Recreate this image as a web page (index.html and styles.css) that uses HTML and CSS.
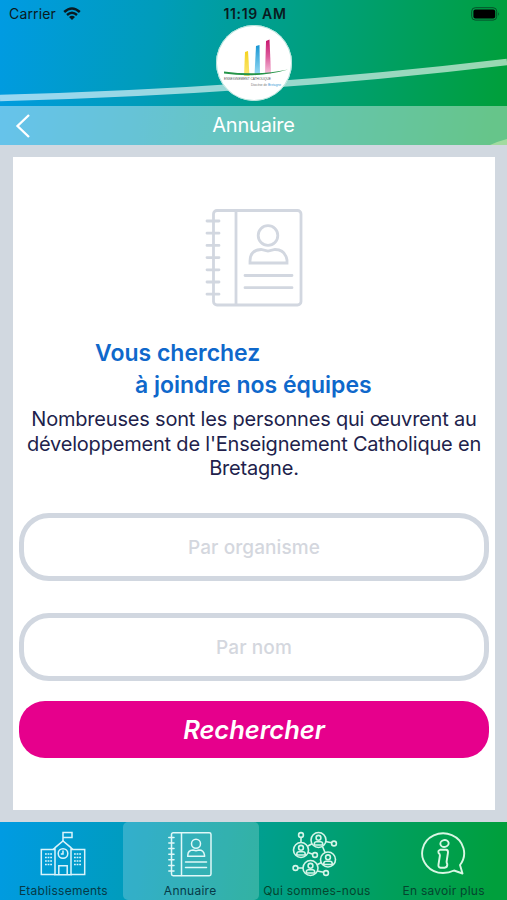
FILE: index.html
```html
<!DOCTYPE html>
<html lang="fr">
<head>
    <meta charset="UTF-8">
    <meta name="viewport" content="width=device-width, initial-scale=1.0">
    <title>Annuaire</title>
    <link rel="stylesheet" href="styles.css">
</head>
<body>
    <div class="app">
        <header class="header">
            <svg class="header-wave" viewBox="0 0 507 145" aria-hidden="true">
                <path d="M0 98 Q265 91 507 62" fill="none" stroke="#fff" stroke-opacity=".6" stroke-width="6.300"/>
                <path d="M490 145 Q499 141 507 139 V145Z" fill="#8fd46f" fill-opacity=".7"/>
            </svg>

            <div class="status-bar">
                <div class="status-left">
                    <span class="carrier">Carrier</span>
                    <svg class="wifi" viewBox="0 0 18 13">
                        <path d="M1.2 5 Q9 -2 16.8 5" fill="none" stroke="#0a1a20" stroke-width="2.5"/>
                        <path d="M4 8 Q9 3.6 14 8" fill="none" stroke="#0a1a20" stroke-width="2.4"/>
                        <path d="M9 13 L6 10 Q9 7.7 12 10Z" fill="#0a1a20"/>
                    </svg>
                </div>
                <span class="time">11:19 AM</span>
                <svg class="battery" viewBox="0 0 30 14">
                    <rect x=".7" y=".7" width="25" height="12.4" rx="3.6" fill="none" stroke="#06502a" stroke-width="1"/>
                    <rect x="2.4" y="2.6" width="21.8" height="8.8" rx="2" fill="#000"/>
                    <path d="M27.2 5 Q29 7 27.2 9Z" fill="#06502a"/>
                </svg>
            </div>

            <div class="logo">
                <svg viewBox="0 0 76 76">
                    <defs>
                        <linearGradient id="yellow" x2="0" y2="1"><stop offset="0" stop-color="#f5d21c"/><stop offset="1" stop-color="#fbe878"/></linearGradient>
                        <linearGradient id="blue" x2="0" y2="1"><stop offset="0" stop-color="#1695d3"/><stop offset="1" stop-color="#9bdcf5"/></linearGradient>
                        <linearGradient id="pink" x2="0" y2="1"><stop offset="0" stop-color="#c8146e"/><stop offset=".5" stop-color="#dd5c9c"/><stop offset="1" stop-color="#f6c5dd"/></linearGradient>
                    </defs>
                    <path d="M29 27 L32 26 L33.5 51 H28Z" fill="url(#yellow)"/>
                    <path d="M40 21 L43.500 20 L44 50 H38.500Z" fill="url(#blue)"/>
                    <path d="M50 16 L53.500 14.500 L55 49 H49Z" fill="url(#pink)"/>
                    <path d="M8 46.500 Q42 51 72 44.500 Q42 53.500 8 48.500Z" fill="#259448"/>
                    <text class="logo-text" x="8" y="54.800" textLength="47" lengthAdjust="spacingAndGlyphs" fill="#555">ENSEIGNEMENT CATHOLIQUE</text>
                    <text class="logo-text" x="35" y="60.800" textLength="30" lengthAdjust="spacingAndGlyphs" fill="#777">Diocèse de <tspan fill="#3a9dd8">Bretagne</tspan></text>
                </svg>
            </div>

            <div class="nav-bar">
                <svg class="back" viewBox="0 0 16 26">
                    <path d="M14 2 L2.500 13 L14 24" fill="none" stroke="#fff" stroke-width="2.3"/>
                </svg>
                <h1 class="nav-title">Annuaire</h1>
            </div>
        </header>

        <main class="content">
            <section class="card">
                <svg class="book" viewBox="0 0 100 100">
                    <g fill="none" stroke="#d2d7e0" stroke-width="2.800" stroke-linecap="round">
                        <rect x="8.500" y="2.500" width="87.500" height="94.500" rx="3.500"/>
                        <path d="M31 3 V96"/>
                        <path d="M2 13 H14 M2 25.200 H14 M2 37.400 H14 M2 49.600 H14 M2 61.800 H14 M2 74 H14 M2 86.200 H14"/>
                        <circle cx="63" cy="27.500" r="9.800"/>
                        <path d="M45 55 H82 V52 Q80 41.500 70 41.500 L63 43 L56 41.500 Q45 42 45 53Z"/>
                        <path d="M40 67.500 H87 M40 79.700 H87"/>
                    </g>
                </svg>

                <h2 class="card-title">
                    <span>Vous cherchez</span>
                    <span class="second-line">à joindre nos équipes</span>
                </h2>
                <p class="card-text">
                    <span>Nombreuses sont les personnes qui œuvrent au</span>
                    <span>développement de l'Enseignement Catholique en</span>
                    <span>Bretagne.</span>
                </p>

                <form class="search">
                    <input class="field" type="text" placeholder="Par organisme">
                    <input class="field" type="text" placeholder="Par nom">
                    <button class="submit" type="button">Rechercher</button>
                </form>
            </section>
        </main>

        <nav class="tabs">
            <a class="tab">
                <svg viewBox="0 0 46 46">
                    <g fill="none" stroke="#d9f3fb" stroke-width="1.500">
                        <path d="M15 43.500 H1.300 V18.500 H15 M31 43.500 H44.700 V18.500 H31"/>
                        <path d="M15 43.800 V16.500 L23 10 L31 16.500 V43.800Z M13 18.500 L23 10 L33 18.500"/>
                        <path d="M23 10 V1.500 H32 V6.500 H23"/>
                        <circle cx="23" cy="22.500" r="4.800"/>
                        <path d="M23 19.500 V23 H20.800"/>
                        <path d="M18.800 43.500 V34.800 H27.200 V43.500"/>
                        <path d="M5 23 H12 M5 26.500 H12 M5 30 H12 M5 33.500 H12 M34 23 H41 M34 26.500 H41 M34 30 H41 M34 33.500 H41" stroke-dasharray="1.800 .8"/>
                    </g>
                </svg>
                <span class="label">Etablissements</span>
            </a>
            <a class="tab active">
                <svg viewBox="0 0 46 46">
                    <g fill="none" stroke="#dff8f8" stroke-width="1.500" stroke-linecap="round">
                        <rect x="4.500" y="1.800" width="39.500" height="43" rx="1.700"/>
                        <path d="M14.500 2 V44.500"/>
                        <path d="M1.800 6.500 H7 M1.800 12 H7 M1.800 17.600 H7 M1.800 23.200 H7 M1.800 28.800 H7 M1.800 34.400 H7 M1.800 40 H7"/>
                        <circle cx="29" cy="12.800" r="4.500"/>
                        <path d="M20.800 25.200 H37.500 V24 Q36.700 19 32 19 L29 19.800 L26 19 Q21 19.300 20.800 24Z"/>
                        <path d="M18.500 31 H39.500 M18.500 36.500 H39.500"/>
                    </g>
                </svg>
                <span class="label">Annuaire</span>
            </a>
            <a class="tab">
                <svg class="network" viewBox="0 0 46 46">
                    <defs>
                        <g id="member">
                            <circle r="7.500"/>
                            <circle cy="-2.200" r="2.400"/>
                            <path d="M-4.200 5 V3.800 Q-4 1.800 -2 1.800 H2 Q4 1.800 4.200 3.800 V5Z"/>
                        </g>
                    </defs>
                    <g fill="none" stroke="#d5f5e8" stroke-width="1.600">
                        <use href="#member" x="26.500" y="9"/>
                        <use href="#member" x="9" y="19"/>
                        <use href="#member" x="36" y="28.500"/>
                        <use href="#member" x="18.500" y="37"/>
                        <circle cx="9" cy="4" r="2.400"/>
                        <circle cx="42" cy="12.500" r="2.400"/>
                        <circle cx="23" cy="24" r="2.400"/>
                        <circle cx="3.500" cy="37" r="2.400"/>
                        <circle cx="34" cy="42" r="2.400"/>
                        <path d="M9 6.500 V11.500 M15.500 15.300 L20 12.700 M33.500 10.500 L39.600 11.800 M30.500 15.500 L33 21.500 M16 21.500 L20.800 23.200 M6 37 H11 M25 33.800 L29.500 31.500 M25 40 L31.800 41.300"/>
                    </g>
                </svg>
                <span class="label label-right">Qui sommes-nous</span>
            </a>
            <a class="tab">
                <svg class="info" viewBox="0 0 46 46">
                    <g fill="none" stroke="#d9f7e4" stroke-width="1.900" stroke-linejoin="round">
                        <path d="M34 39.500 Q29 42 23 42 A21 19.800 0 1 1 40 34 L42.500 42.500 Z"/>
                        <ellipse cx="24.500" cy="12.500" rx="4.200" ry="3.400" transform="rotate(-12 24.500 12.500)"/>
                        <path d="M20 18.800 H26 Q28.200 19 28 21.500 L26.600 30.500 Q26.500 32 27.300 33 Q27.500 36.500 24.500 36.800 H20.500 Q18 36.500 18.500 33.500 L19.900 24.500 Q20 23.200 18.600 22 Q17.800 19.500 20 18.800Z"/>
                    </g>
                </svg>
                <span class="label label-right">En savoir plus</span>
            </a>
        </nav>
    </div>
</body>
</html>
```

FILE: styles.css
```css
* {
    margin: 0;
    padding: 0;
    box-sizing: border-box;
}

body {
    font-family: Inter, "Liberation Sans", sans-serif;
    background: #d1d8e0;
}

.app {
    display: flex;
    flex-direction: column;
    width: 507px;
    height: 900px;
    overflow: hidden;
}

/* Header */
.header {
    position: relative;
    display: flex;
    flex-direction: column;
    height: 145px;
    background: linear-gradient(100deg, #009be3 0%, #009cba 30%, #009f8c 52%, #009f62 75%, #009f3c 97%);
}

.header-wave {
    position: absolute;
    top: 0;
    left: 0;
    width: 507px;
    height: 145px;
}

.status-bar {
    position: relative;
    display: grid;
    grid-template-columns: 1fr auto 1fr;
    align-items: center;
    height: 27px;
    padding: 0 6px 0 9px;
    color: #0a1a20;
}

.status-left {
    display: flex;
    align-items: center;
    gap: 7px;
}

.carrier {
    font-size: 14px;
    letter-spacing: 0.15px;
}

.wifi {
    width: 18px;
    height: 13px;
}

.time {
    font-size: 14px;
    font-weight: 600;
    letter-spacing: 0.65px;
}

.battery {
    width: 30px;
    height: 14px;
    justify-self: end;
}

.logo {
    position: relative;
    align-self: center;
    width: 76px;
    height: 76px;
    margin-top: -2px;
    border-radius: 50%;
    background: #fff;
    box-shadow: inset 0 0 0 1px #b5e2db;
}

.logo svg {
    display: block;
}

.logo-text {
    font-family: "Liberation Sans", sans-serif;
    font-size: 3.5px;
}

.nav-bar {
    position: relative;
    display: grid;
    grid-template-columns: 40px 1fr 40px;
    align-items: center;
    height: 39px;
    margin-top: auto;
    background: rgba(255, 255, 255, 0.4);
}

.back {
    width: 16px;
    height: 26px;
    margin-left: 15px;
}

.nav-title {
    padding-bottom: 2px;
    text-align: center;
    color: #fff;
    font-size: 20px;
    font-weight: 400;
    letter-spacing: -0.2px;
}

/* Content */
.content {
    height: 677px;
    padding: 12px 12px 12px 13px;
    background: #d1d8e0;
}

.card {
    display: flex;
    flex-direction: column;
    height: 653px;
    padding: 51px 6px 0;
    background: #fff;
}

.book {
    width: 100px;
    height: 100px;
    margin-left: 186px;
}

.card-title {
    display: flex;
    flex-direction: column;
    margin: 30px 0 0 76px;
    color: #0f68cb;
    font-size: 23px;
    font-weight: 600;
    line-height: 31.5px;
}

.second-line {
    margin-left: 40px;
}

.card-text {
    display: flex;
    flex-direction: column;
    align-items: center;
    margin-top: 6px;
    color: #221f4c;
    font-size: 20px;
    line-height: 24.6px;
    letter-spacing: -0.2px;
    white-space: nowrap;
}

.search {
    display: flex;
    flex-direction: column;
    margin-top: 32px;
}

.field {
    width: 470px;
    height: 68px;
    margin-bottom: 32px;
    padding-top: 1px;
    border: 5px solid #d1d7e0;
    border-radius: 30px;
    background: #fff;
    font-family: inherit;
    font-size: 19px;
    font-weight: 500;
    letter-spacing: 0.1px;
    text-align: center;
}

.field + .field {
    margin-bottom: 20px;
}

.field::placeholder {
    color: #d4d7de;
}

.submit {
    width: 470px;
    height: 57px;
    border: none;
    border-radius: 26px;
    background: #e6008c;
    color: #fff;
    font-family: inherit;
    font-size: 25.5px;
    font-style: italic;
    font-weight: 600;
}

/* Tab bar */
.tabs {
    display: grid;
    grid-template-columns: repeat(4, 1fr);
    height: 78px;
    background: linear-gradient(100deg, #009be3 0%, #009cba 28%, #009f8c 52%, #009f5c 77%, #009f3c 97%);
}

.tab {
    position: relative;
    display: flex;
    flex-direction: column;
    align-items: center;
    padding-top: 9px;
}

.tab.active::before {
    content: '';
    position: absolute;
    inset: 0 -5px 0 -4px;
    border-radius: 5px;
    background: rgba(255, 255, 255, 0.2);
}

.tab svg {
    position: relative;
    width: 46px;
    height: 46px;
}

.tab .network {
    margin-right: 3px;
}

.tab .info {
    margin-right: 2px;
}

.label {
    position: relative;
    margin-top: 6px;
    color: #063a48;
    font-size: 12px;
    line-height: 15px;
    letter-spacing: 0.25px;
    white-space: nowrap;
}

.label-right {
    color: #05452f;
}
```
